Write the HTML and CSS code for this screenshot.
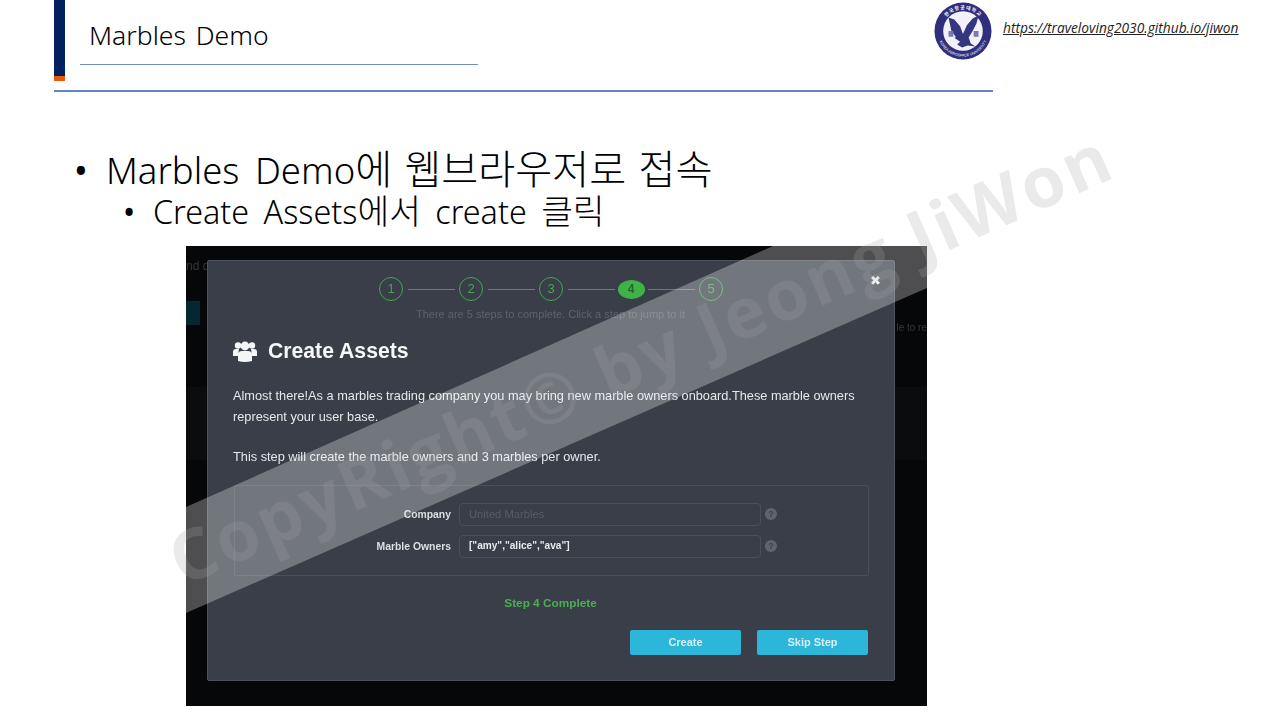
FILE: index.html
```html
<!DOCTYPE html>
<html lang="ko">
<head>
<meta charset="utf-8">
<title>Marbles Demo</title>
<link rel="stylesheet" href="styles.css">
</head>
<body>
<main class="slide">
  <header class="header">
    <div class="accent"></div>
    <div class="title-block"><h1 class="title">Marbles Demo</h1></div>
    <svg class="logo" viewBox="0 0 60 60" aria-label="Korea Aerospace University">
      <defs>
        <path id="ring-top" d="M7.5 30a22.5 22.5 0 0 1 45 0"/>
        <path id="ring-bottom" d="M3.5 30a26.500 26.500 0 0 0 53 0"/>
      </defs>
      <circle cx="30" cy="30" r="29.500" fill="#2f2f7e"/>
      <circle cx="30" cy="30" r="20.500" fill="#f1f1f7"/>
      <text class="ring-text"><textPath href="#ring-top" startOffset="50%" text-anchor="middle">한국항공대학교</textPath></text>
      <text class="ring-text-en"><textPath href="#ring-bottom" startOffset="50%" text-anchor="middle">KOREA AEROSPACE UNIVERSITY</textPath></text>
      <path fill="#34367f" d="M15 16l6 2 6 7 3 8v7l-6-2-6-8zM46 14l-2 8-4 8-5 8-5 2v-7l4-9 6-7z"/>
      <path fill="#34367f" d="M21 37l9-3 6 3 2 6 5 3-8-1-6 2-5-3 3-3z"/>
      <path fill="#7a7ab0" d="M15 30h5v6h-5zM41 30h5v6h-5z"/>
    </svg>
    <a class="site-link" href="#">https://traveloving2030.github.io/jiwon</a>
  </header>
  <div class="rule"></div>

  <section class="bullets">
    <p class="level-one"><span class="dot">•</span><span>Marbles Demo<span class="hangul">에 웹브라우저로 접속</span></span></p>
    <p class="level-two"><span class="dot">•</span><span>Create Assets<span class="hangul">에서</span> create <span class="hangul">클릭</span></span></p>
  </section>

  <div class="shot">
    <div class="backdrop">
      <span class="ghost ghost-a">nd d</span>
      <span class="ghost-btn"></span>
      <span class="ghost ghost-b">les</span>
      <span class="ghost ghost-c">le to re</span>
      <span class="ghost-row"></span>
    </div>
    <div class="modal">
      <div class="steps">
        <span class="step">1</span><i class="link"></i>
        <span class="step">2</span><i class="link"></i>
        <span class="step">3</span><i class="link"></i>
        <span class="step current">4</span><i class="link"></i>
        <span class="step">5</span>
      </div>
      <span class="close">✖</span>
      <p class="hint">There are 5 steps to complete. Click a step to jump to it</p>
      <h2 class="heading">
        <svg class="users" viewBox="0 0 24 22" aria-hidden="true">
          <circle cx="5" cy="5.500" r="3.200"/><circle cx="19" cy="5.500" r="3.200"/><circle cx="12" cy="6" r="4.400"/>
          <path d="M0 16v-4q0-3 3-3h3q-1 3 0 7zM24 16v-4q0-3-3-3h-3q1 3 0 7z"/>
          <path d="M5 21v-6q0-4 4-4h6q4 0 4 4v6q-7 2-14 0z"/>
        </svg>
        Create Assets
      </h2>
      <p class="copy">Almost there!As a marbles trading company you may bring new marble owners onboard.These marble owners represent your user base.</p>
      <p class="copy copy-second">This step will create the marble owners and 3 marbles per owner.</p>
      <div class="fields">
        <div class="field">
          <label class="field-label">Company</label>
          <span class="input muted">United Marbles</span>
          <span class="help">?</span>
        </div>
        <div class="field">
          <label class="field-label">Marble Owners</label>
          <span class="input">["amy","alice","ava"]</span>
          <span class="help">?</span>
        </div>
      </div>
      <p class="complete">Step 4 Complete</p>
      <div class="actions">
        <span class="button">Create</span>
        <span class="button">Skip Step</span>
      </div>
    </div>
    <div class="band"></div>
  </div>
  <div class="watermark">CopyRight© by Jeong JiWon</div>
</main>
</body>
</html>
```

FILE: styles.css
```css
* { box-sizing: border-box; }
html, body { margin: 0; padding: 0; background: #fff; }
.slide {
  position: relative;
  width: 1280px;
  height: 720px;
  overflow: hidden;
  background: #fff;
  color: #000;
  font-family: "Noto Sans", "Noto Sans CJK KR", sans-serif;
}
.header { display: flex; align-items: flex-start; height: 90px; padding-left: 54px; }
.accent {
  width: 11px;
  height: 81px;
  background: linear-gradient(#002060 0 76px, #e8590c 76px);
}
.title-block {
  width: 398px;
  height: 65px;
  margin-left: 15px;
  padding: 17px 0 0 9px;
  border-bottom: 1px solid #6f8fc0;
}
.title { margin: 0; font-size: 26.500px; line-height: 36px; font-weight: 300; word-spacing: 3px; color: #000; }
.logo { width: 58px; height: 58px; margin: 2px 0 0 456px; flex: none; }
.ring-text { font-size: 5px; font-weight: 700; fill: #fff; letter-spacing: 1px; font-family: "Noto Sans CJK KR", sans-serif; }
.ring-text-en { font-size: 3.800px; fill: #fff; font-family: "Liberation Sans", sans-serif; }
.site-link {
  margin: 19px 0 0 11px;
  font: italic 13.750px/18px "Open Sans", "Noto Sans", sans-serif;
  color: #222;
  text-decoration: underline;
  white-space: nowrap;
}
.rule { width: 939px; height: 2px; margin-left: 54px; background: #5f86c2; }

.bullets { height: 89px; margin: 53px 0 0 76px; }
.level-one, .level-two { margin: 0; display: flex; align-items: baseline; white-space: nowrap; color: #000; font-weight: 300; }
.level-one { height: 44px; font-size: 36.500px; line-height: 44px; word-spacing: 6px; }
.level-two { height: 38px; font-size: 32.300px; line-height: 38px; word-spacing: 6px; margin: 1px 0 0 47px; }
.level-one .hangul { font-size: 40.200px; font-family: "Noto Sans CJK KR", sans-serif; word-spacing: 1px; }
.level-two .hangul { font-size: 34.500px; font-family: "Noto Sans CJK KR", sans-serif; word-spacing: 0; }
.dot { width: 30px; font-weight: 400; }
.level-one .dot { margin-left: -2px; width: 32px; }

.shot {
  position: relative;
  width: 741px;
  height: 460px;
  margin: 12px 0 0 186px;
  padding: 14px 32px 25px 21px;
  background: #060709;
  overflow: hidden;
  font-family: "Liberation Sans", sans-serif;
}
.backdrop { position: absolute; inset: 0; filter: blur(.7px); }
.ghost { position: absolute; font-size: 12px; color: #34373c; white-space: nowrap; }
.ghost-a { left: 0; top: 13px; }
.ghost-b { left: 0; top: 151px; font-size: 14px; }
.ghost-c { right: 0; top: 76px; font-size: 10px; }
.ghost-btn { position: absolute; left: 0; top: 55px; width: 14px; height: 24px; background: #04282f; }
.ghost-row { position: absolute; left: 0; right: 0; top: 141px; height: 73px; background: #0b0c0e; }

.modal {
  position: relative;
  height: 421px;
  padding: 16px 25px 0;
  background: #393e48;
  border: 1px solid #4d535e;
  border-radius: 2px;
  color: #eef0f2;
  filter: blur(.5px);
}
.steps { display: flex; align-items: center; justify-content: center; gap: 4.500px; height: 24px; }
.step {
  width: 24px;
  height: 24px;
  border: 1.500px solid #45a550;
  border-radius: 50%;
  color: #45a550;
  font-size: 13px;
  line-height: 21px;
  text-align: center;
  flex: none;
}
.step.current { width: 27px; height: 19px; margin: 0 -1.500px; line-height: 17px; background: #3fb34a; color: #27662e; border-color: #3fb34a; font-weight: 700; font-size: 12px; }
.link { display: block; width: 47px; height: 1px; background: #3f9a4a; flex: none; }
.close { position: absolute; top: 12px; right: 13px; font-size: 13px; line-height: 16px; color: #fff; }
.hint { margin: 6px 0 0 -1px; text-align: center; font-size: 11px; line-height: 14px; color: #5d636d; }
.heading { display: flex; align-items: center; gap: 11px; margin: 15px 0 0; font-size: 21.200px; line-height: 30px; font-weight: 700; color: #f6f7f8; }
.users { width: 24px; height: 22px; fill: #f4f5f6; flex: none; }
.copy { margin: 20px 0 0; width: 640px; font-size: 12.750px; line-height: 20.500px; color: #e6e8ea; }
.copy-second { margin-top: 20px; }
.fields { margin: 17px 0 0 1px; width: 635px; height: 91px; padding: 17px 0 0; border: 1.500px solid #4a505b; border-radius: 2px; display: flex; flex-direction: column; gap: 9px; }
.field { display: flex; align-items: center; height: 23px; }
.field-label { width: 224px; padding-right: 8px; text-align: right; font-size: 10.400px; font-weight: 700; color: #dcdfe2; flex: none; }
.input { width: 302px; height: 23px; padding-left: 9px; border: 1.500px solid #4a505b; border-radius: 4px; font-size: 10.100px; font-weight: 700; line-height: 20px; color: #e9eaec; flex: none; }
.input.muted { color: #575d67; font-weight: 400; font-size: 11.200px; }
.help { width: 12px; height: 12px; margin-left: 4px; border-radius: 50%; background: #5f6570; color: #393e48; font-size: 9px; font-weight: 700; line-height: 12px; text-align: center; }
.complete { margin: 20px 0 0 -1px; text-align: center; font-size: 11.800px; line-height: 14px; font-weight: 700; color: #4caf50; }
.actions { display: flex; justify-content: flex-end; gap: 16px; width: 635px; margin-top: 20px; }
.button { width: 111px; height: 25px; background: #2cb6d9; border-radius: 2px; text-align: center; font-size: 11px; font-weight: 700; line-height: 25px; color: #d7eef4; }
.band {
  position: absolute;
  inset: 0;
  background: rgba(255, 255, 255, .29);
  clip-path: polygon(0 261px, 587px 0, 741px 0, 741px 42px, 0 367px);
}
.watermark {
  position: absolute;
  left: 172px;
  top: 522px;
  font: 700 70px/80px "Open Sans", sans-serif;
  letter-spacing: 3px;
  white-space: nowrap;
  color: rgba(164, 164, 164, .23);
  transform: rotate(-23.700deg);
  transform-origin: 0 50%;
}
```
